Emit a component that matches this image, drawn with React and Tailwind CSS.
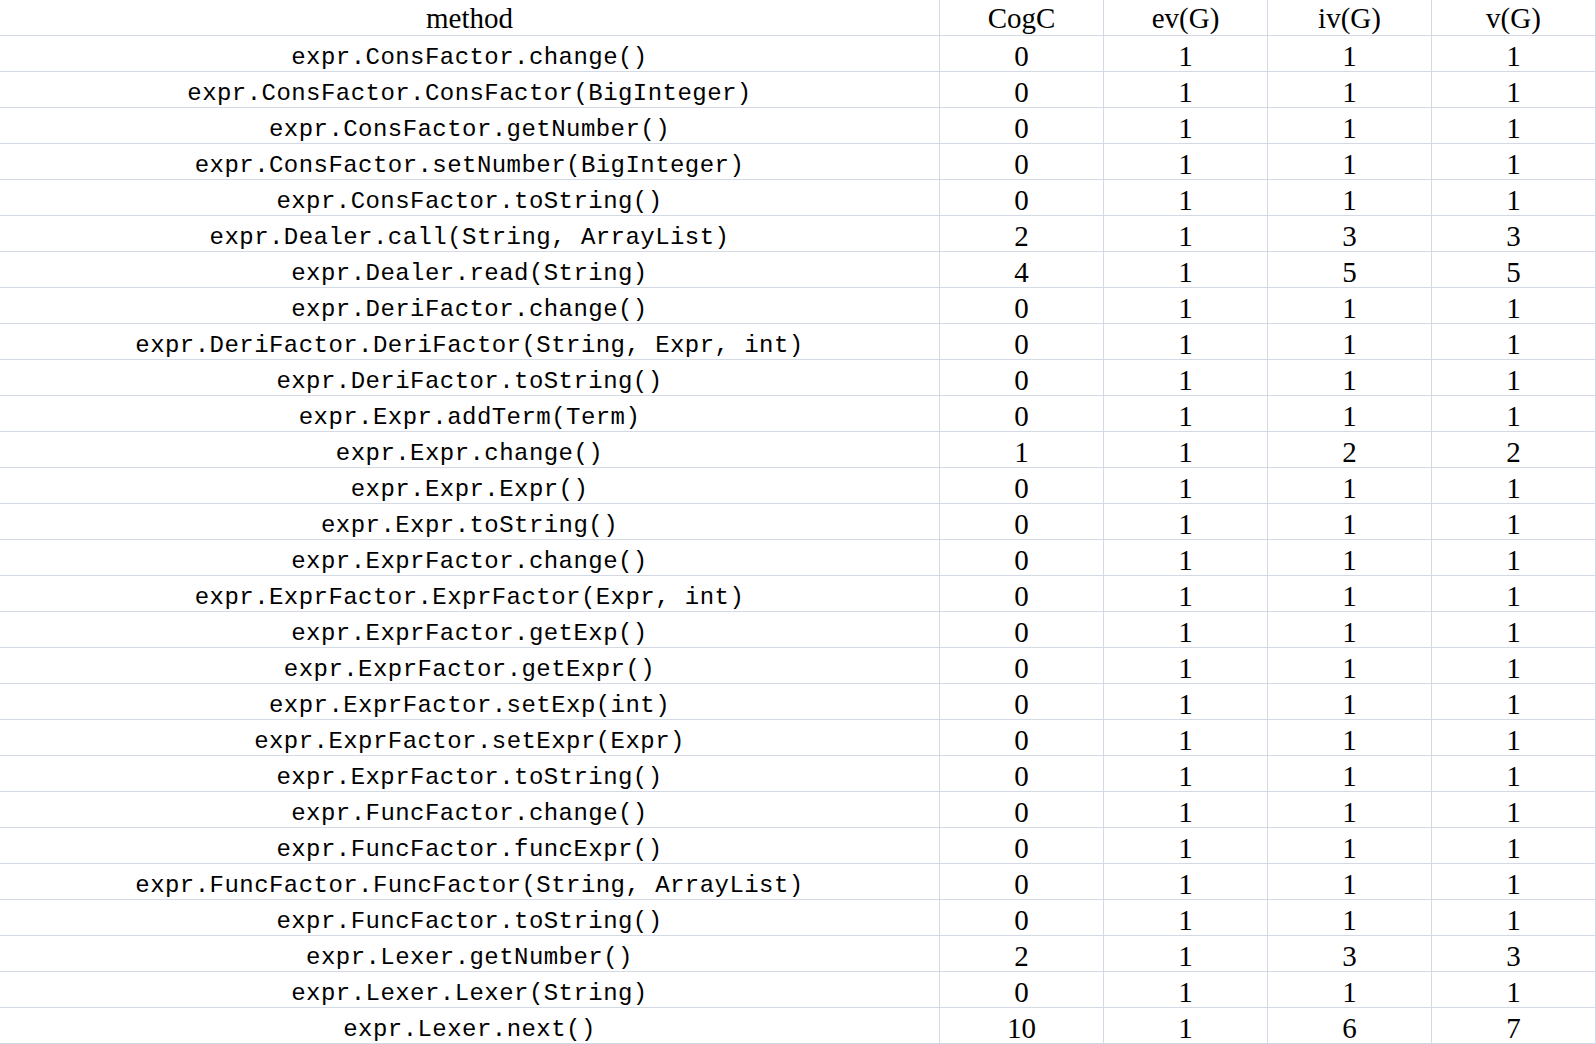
import React from "react";

const rows = [
  ["expr.ConsFactor.change()", 0, 1, 1, 1],
  ["expr.ConsFactor.ConsFactor(BigInteger)", 0, 1, 1, 1],
  ["expr.ConsFactor.getNumber()", 0, 1, 1, 1],
  ["expr.ConsFactor.setNumber(BigInteger)", 0, 1, 1, 1],
  ["expr.ConsFactor.toString()", 0, 1, 1, 1],
  ["expr.Dealer.call(String, ArrayList)", 2, 1, 3, 3],
  ["expr.Dealer.read(String)", 4, 1, 5, 5],
  ["expr.DeriFactor.change()", 0, 1, 1, 1],
  ["expr.DeriFactor.DeriFactor(String, Expr, int)", 0, 1, 1, 1],
  ["expr.DeriFactor.toString()", 0, 1, 1, 1],
  ["expr.Expr.addTerm(Term)", 0, 1, 1, 1],
  ["expr.Expr.change()", 1, 1, 2, 2],
  ["expr.Expr.Expr()", 0, 1, 1, 1],
  ["expr.Expr.toString()", 0, 1, 1, 1],
  ["expr.ExprFactor.change()", 0, 1, 1, 1],
  ["expr.ExprFactor.ExprFactor(Expr, int)", 0, 1, 1, 1],
  ["expr.ExprFactor.getExp()", 0, 1, 1, 1],
  ["expr.ExprFactor.getExpr()", 0, 1, 1, 1],
  ["expr.ExprFactor.setExp(int)", 0, 1, 1, 1],
  ["expr.ExprFactor.setExpr(Expr)", 0, 1, 1, 1],
  ["expr.ExprFactor.toString()", 0, 1, 1, 1],
  ["expr.FuncFactor.change()", 0, 1, 1, 1],
  ["expr.FuncFactor.funcExpr()", 0, 1, 1, 1],
  ["expr.FuncFactor.FuncFactor(String, ArrayList)", 0, 1, 1, 1],
  ["expr.FuncFactor.toString()", 0, 1, 1, 1],
  ["expr.Lexer.getNumber()", 2, 1, 3, 3],
  ["expr.Lexer.Lexer(String)", 0, 1, 1, 1],
  ["expr.Lexer.next()", 10, 1, 6, 7],
];

const headers = ["method", "CogC", "ev(G)", "iv(G)", "v(G)"];

export default function App() {
  return (
    <div className="w-[1596px] h-[1044px] bg-white text-black overflow-hidden">
      <div className="grid grid-cols-[940px_164px_164px_164px_164px]">
        {headers.map((h) => (
          <div
            key={h}
            className="h-[36px] border-b border-r border-[#d3dae5] text-center font-['Liberation_Serif','Times_New_Roman',serif] text-[29px] leading-[34px] pt-[1px] whitespace-nowrap"
          >
            {h}
          </div>
        ))}
        {rows.map((r, i) => (
          <React.Fragment key={i}>
            <div className="h-[36px] border-b border-r border-[#d3dae5] text-center font-['Liberation_Mono','Courier_New',monospace] text-[24px] tracking-[0.45px] leading-[24px] pt-[10px] whitespace-pre">
              {r[0]}
            </div>
            {r.slice(1).map((v, j) => (
              <div
                key={j}
                className="h-[36px] border-b border-r border-[#d3dae5] text-center font-['Liberation_Serif','Times_New_Roman',serif] text-[29px] leading-[30px] pt-[5px]"
              >
                {v}
              </div>
            ))}
          </React.Fragment>
        ))}
      </div>
    </div>
  );
}
